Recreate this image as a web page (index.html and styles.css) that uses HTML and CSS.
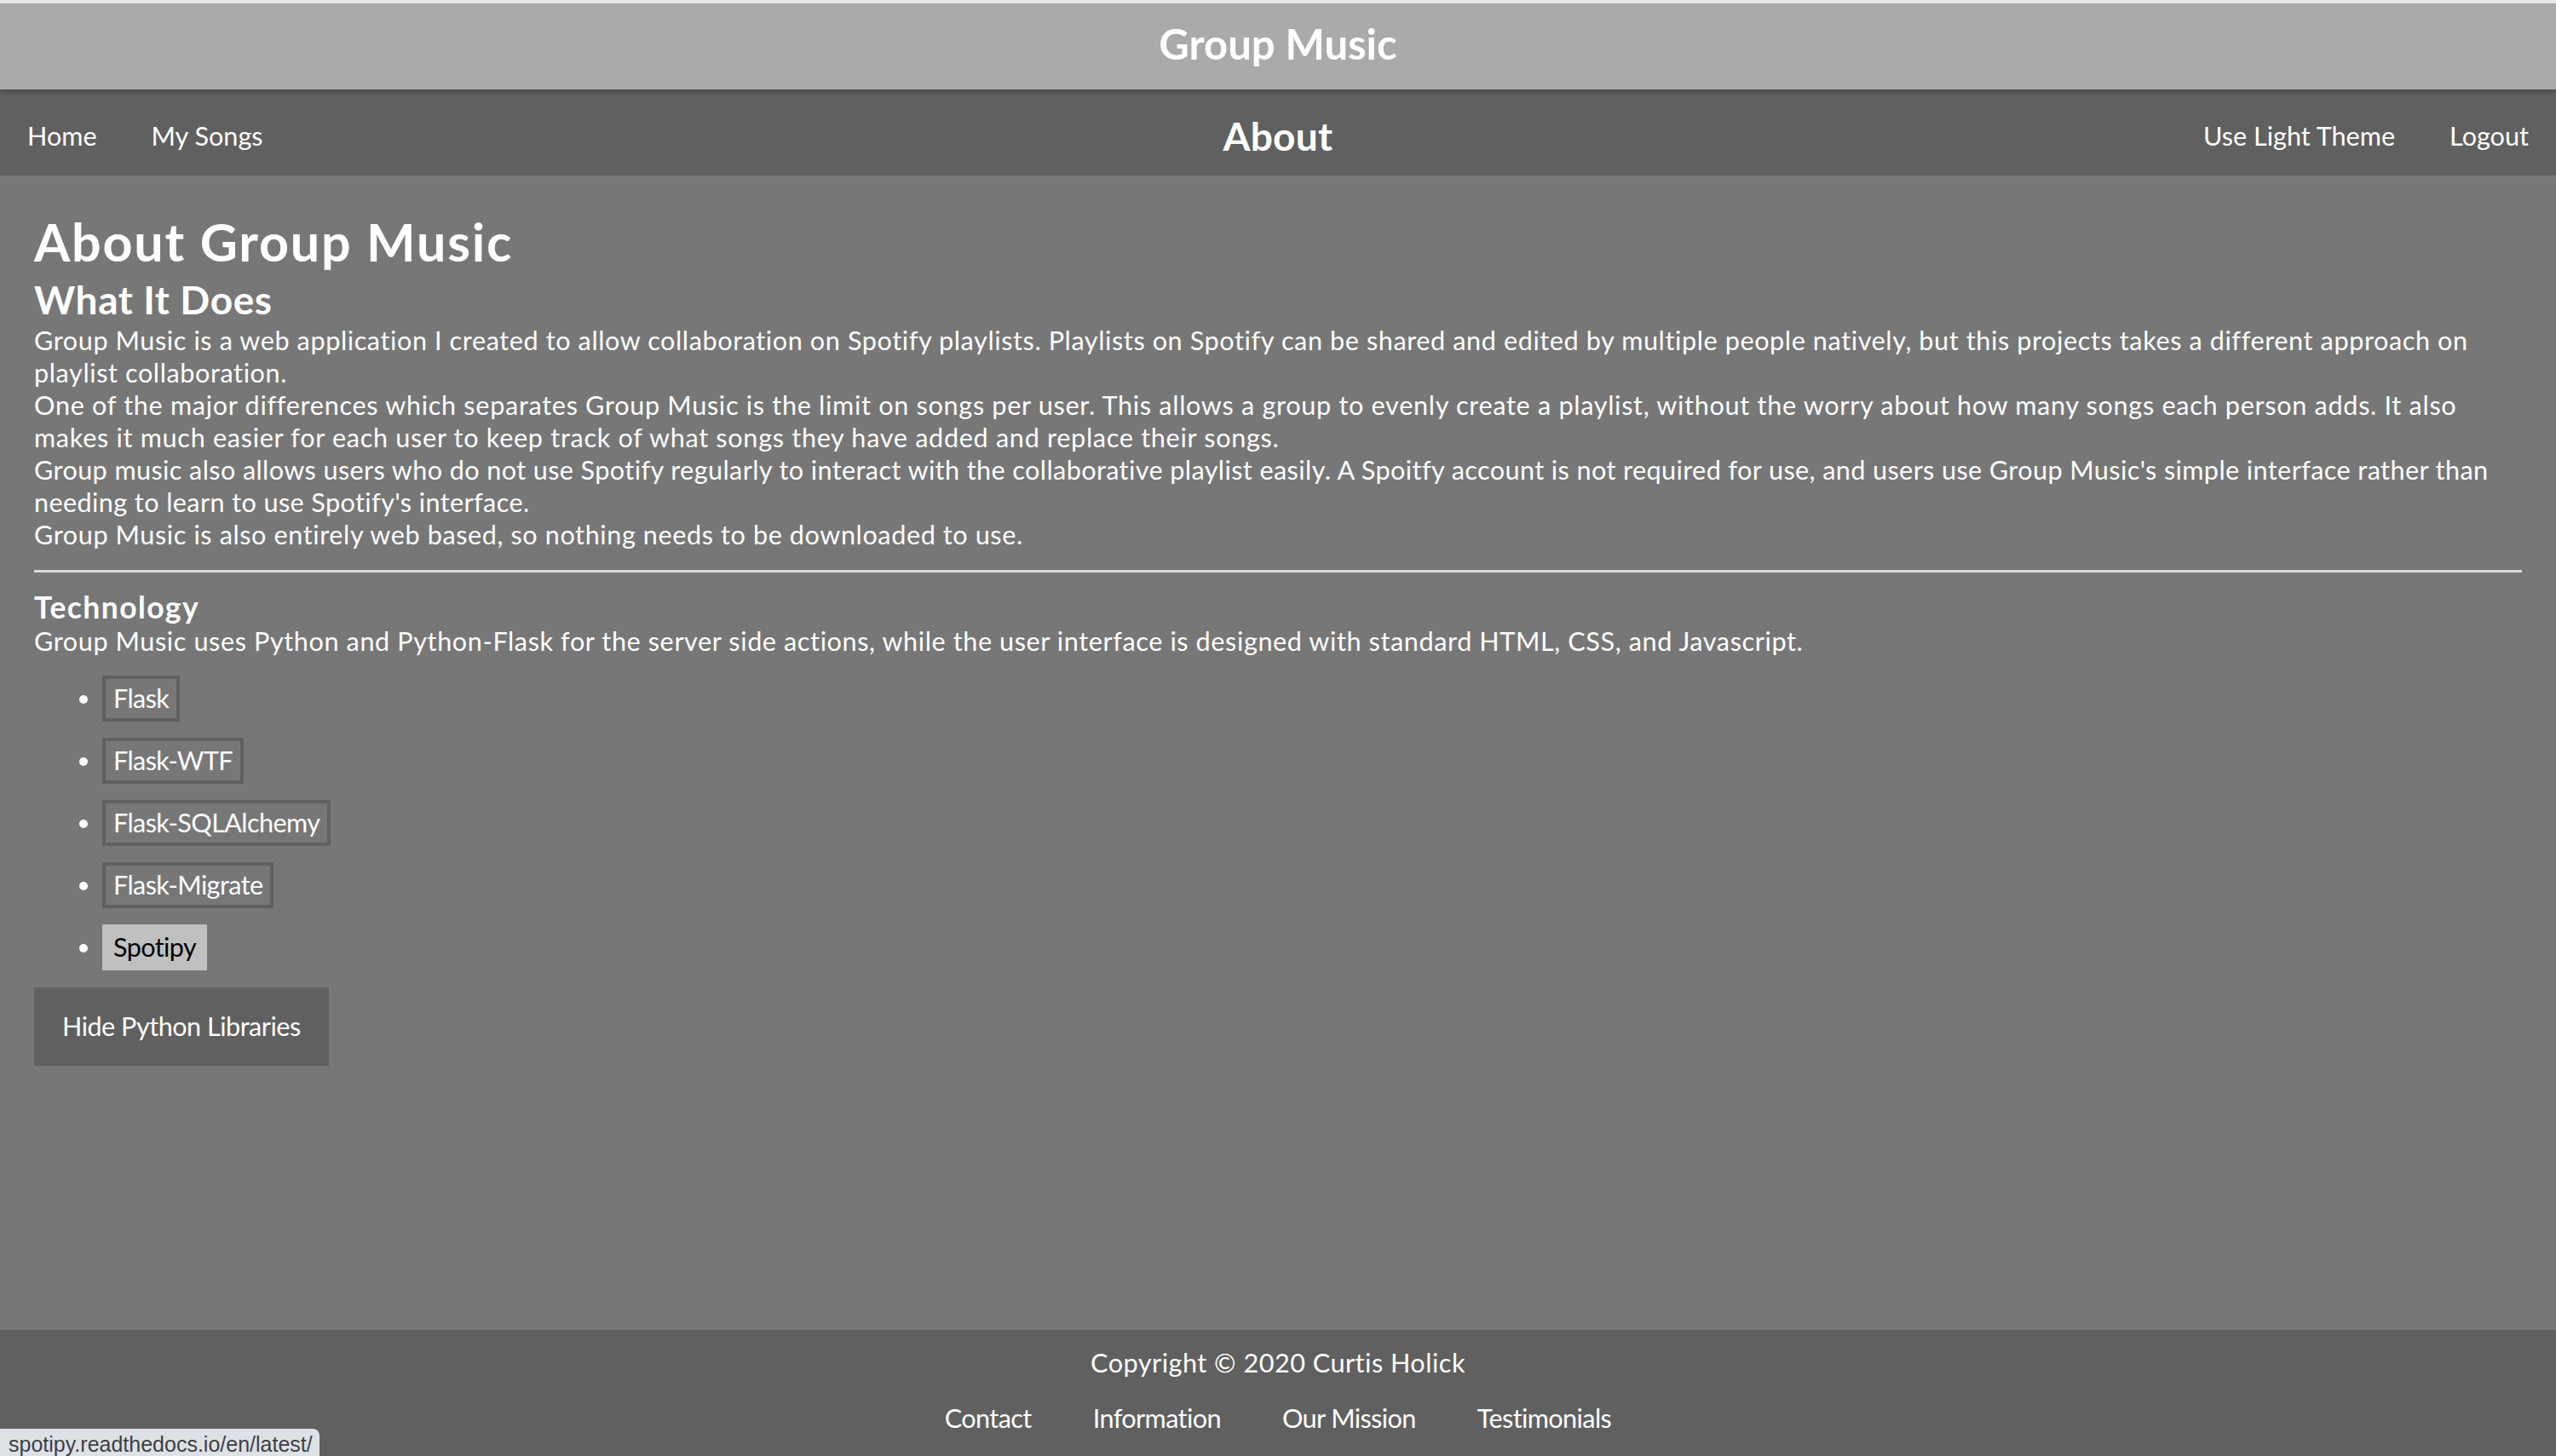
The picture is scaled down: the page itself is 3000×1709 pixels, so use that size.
FILE: index.html
```html
<!DOCTYPE html>
<html lang="en">
<head>
<meta charset="utf-8">
<title>About - Group Music</title>
<link rel="stylesheet" href="styles.css">
</head>
<body>
<div class="page">
  <header class="site-header">
    <div class="site-title">Group Music</div>
  </header>
  <nav class="site-nav">
    <div class="nav-left">
      <a class="nav-link" href="#">Home</a>
      <a class="nav-link" href="#">My Songs</a>
    </div>
    <div class="nav-title">About</div>
    <div class="nav-right">
      <a class="nav-link" href="#">Use Light Theme</a>
      <a class="nav-link" href="#">Logout</a>
    </div>
  </nav>
  <main class="content">
    <h1 class="page-heading">About Group Music</h1>
    <h2 class="section-heading">What It Does</h2>
    <p class="para">Group Music is a web application I created to allow collaboration on Spotify playlists. Playlists on Spotify can be shared and edited by multiple people natively, but this projects takes a different approach on playlist collaboration.</p>
    <p class="para para-loose">One of the major differences which separates Group Music is the limit on songs per user. This allows a group to evenly create a playlist, without the worry about how many songs each person adds. It also makes it much easier for each user to keep track of what songs they have added and replace their songs.</p>
    <p class="para para-tight">Group music also allows users who do not use Spotify regularly to interact with the collaborative playlist easily. A Spoitfy account is not required for use, and users use Group Music's simple interface rather than needing to learn to use Spotify's interface.</p>
    <p class="para">Group Music is also entirely web based, so nothing needs to be downloaded to use.</p>
    <hr class="divider">
    <h3 class="sub-heading">Technology</h3>
    <p class="para">Group Music uses Python and Python-Flask for the server side actions, while the user interface is designed with standard HTML, CSS, and Javascript.</p>
    <ul class="lib-list">
      <li class="lib-item"><a class="lib-link" href="#">Flask</a></li>
      <li class="lib-item"><a class="lib-link" href="#">Flask-WTF</a></li>
      <li class="lib-item"><a class="lib-link" href="#">Flask-SQLAlchemy</a></li>
      <li class="lib-item"><a class="lib-link" href="#">Flask-Migrate</a></li>
      <li class="lib-item"><a class="lib-link lib-link-hover" href="#">Spotipy</a></li>
    </ul>
    <button class="toggle-btn" type="button">Hide Python Libraries</button>
  </main>
  <footer class="site-footer">
    <div class="copyright">Copyright © 2020 Curtis Holick</div>
    <div class="footer-links">
      <a class="footer-link" href="#">Contact</a>
      <a class="footer-link" href="#">Information</a>
      <a class="footer-link" href="#">Our Mission</a>
      <a class="footer-link" href="#">Testimonials</a>
    </div>
  </footer>
</div>
<div class="status-bubble">spotipy.readthedocs.io/en/latest/</div>
</body>
</html>
```

FILE: styles.css
```css
html, body {
  margin: 0;
  padding: 0;
}

body {
  background: #777777;
  color: #ffffff;
  font-family: "Lato", "Open Sans", sans-serif;
  font-size: 30.6px;
  line-height: 38px;
  overflow: hidden;
}

.page {
  display: flex;
  flex-direction: column;
  min-height: 1709px;
  border-top: 4px solid #e9e9e9;
  box-sizing: border-box;
}

a {
  color: #ffffff;
  text-decoration: none;
}

.site-header {
  background: #aaaaaa;
  height: 101px;
  box-sizing: border-box;
  padding-bottom: 8px;
  display: flex;
  align-items: center;
  justify-content: center;
  position: relative;
  z-index: 2;
  box-shadow: 0 3px 5px rgba(0, 0, 0, 0.25);
}

.site-title {
  font-weight: 700;
  font-size: 49px;
  line-height: 60px;
}

.site-nav {
  background: #606060;
  height: 101px;
  box-sizing: border-box;
  padding-top: 8px;
  display: grid;
  grid-template-columns: 1fr auto 1fr;
  align-items: center;
}

.nav-left,
.nav-right {
  display: flex;
  align-items: center;
}

.nav-right {
  justify-content: flex-end;
}

.nav-link {
  padding: 0 32px;
  font-size: 30.6px;
}

.nav-title {
  font-weight: 700;
  font-size: 46px;
  line-height: 56px;
  letter-spacing: 0.3px;
}

.content {
  flex: 1;
  padding: 44px 40px 0 40px;
}

.page-heading {
  margin: 0;
  font-size: 61px;
  line-height: 68px;
  font-weight: 700;
  letter-spacing: 1.8px;
}

.section-heading {
  margin: 9px 0 4px 0;
  font-size: 46px;
  line-height: 50px;
  font-weight: 700;
  letter-spacing: 0.6px;
}

.para {
  margin: 0;
  letter-spacing: 0.6px;
}

.para-loose {
  letter-spacing: 0.7px;
}

.para-tight {
  letter-spacing: 0.4px;
}

.divider {
  border: none;
  height: 3px;
  background: #d9d9d9;
  margin: 22px 0 20px 0;
}

.sub-heading {
  margin: 0;
  font-size: 35.5px;
  line-height: 42px;
  font-weight: 700;
  letter-spacing: 1.4px;
}

.lib-list {
  margin: 21px 0 0 0;
  padding-left: 80px;
  list-style: disc;
}

.lib-item {
  margin-bottom: 19px;
}

.lib-link {
  display: inline-block;
  padding: 4px 9px;
  border: 4px solid #606060;
  line-height: 38px;
  letter-spacing: -0.6px;
}

.lib-link-hover {
  background: #c0c0c0;
  border-color: #c0c0c0;
  color: #000000;
}

.toggle-btn {
  margin-top: 1px;
  background: #606060;
  color: #ffffff;
  border: none;
  font-family: inherit;
  font-size: 30.6px;
  line-height: 38px;
  letter-spacing: -0.5px;
  padding: 27px 33px;
  cursor: pointer;
}

.site-footer {
  background: #606060;
  height: 148px;
  padding-top: 20px;
  box-sizing: border-box;
  text-align: center;
}

.copyright {
  letter-spacing: 0.5px;
}

.footer-links {
  margin-top: 27px;
  display: flex;
  justify-content: center;
}

.footer-link {
  padding: 0 36px;
  letter-spacing: -0.6px;
}

.status-bubble {
  position: fixed;
  left: 0;
  bottom: 0;
  width: 375px;
  height: 32px;
  box-sizing: border-box;
  background: #dee1e6;
  color: #3c4043;
  border-top-right-radius: 8px;
  font-family: "Liberation Sans", sans-serif;
  font-size: 25px;
  line-height: 25px;
  padding: 6px 0 0 10px;
  white-space: nowrap;
  overflow: hidden;
}
```
